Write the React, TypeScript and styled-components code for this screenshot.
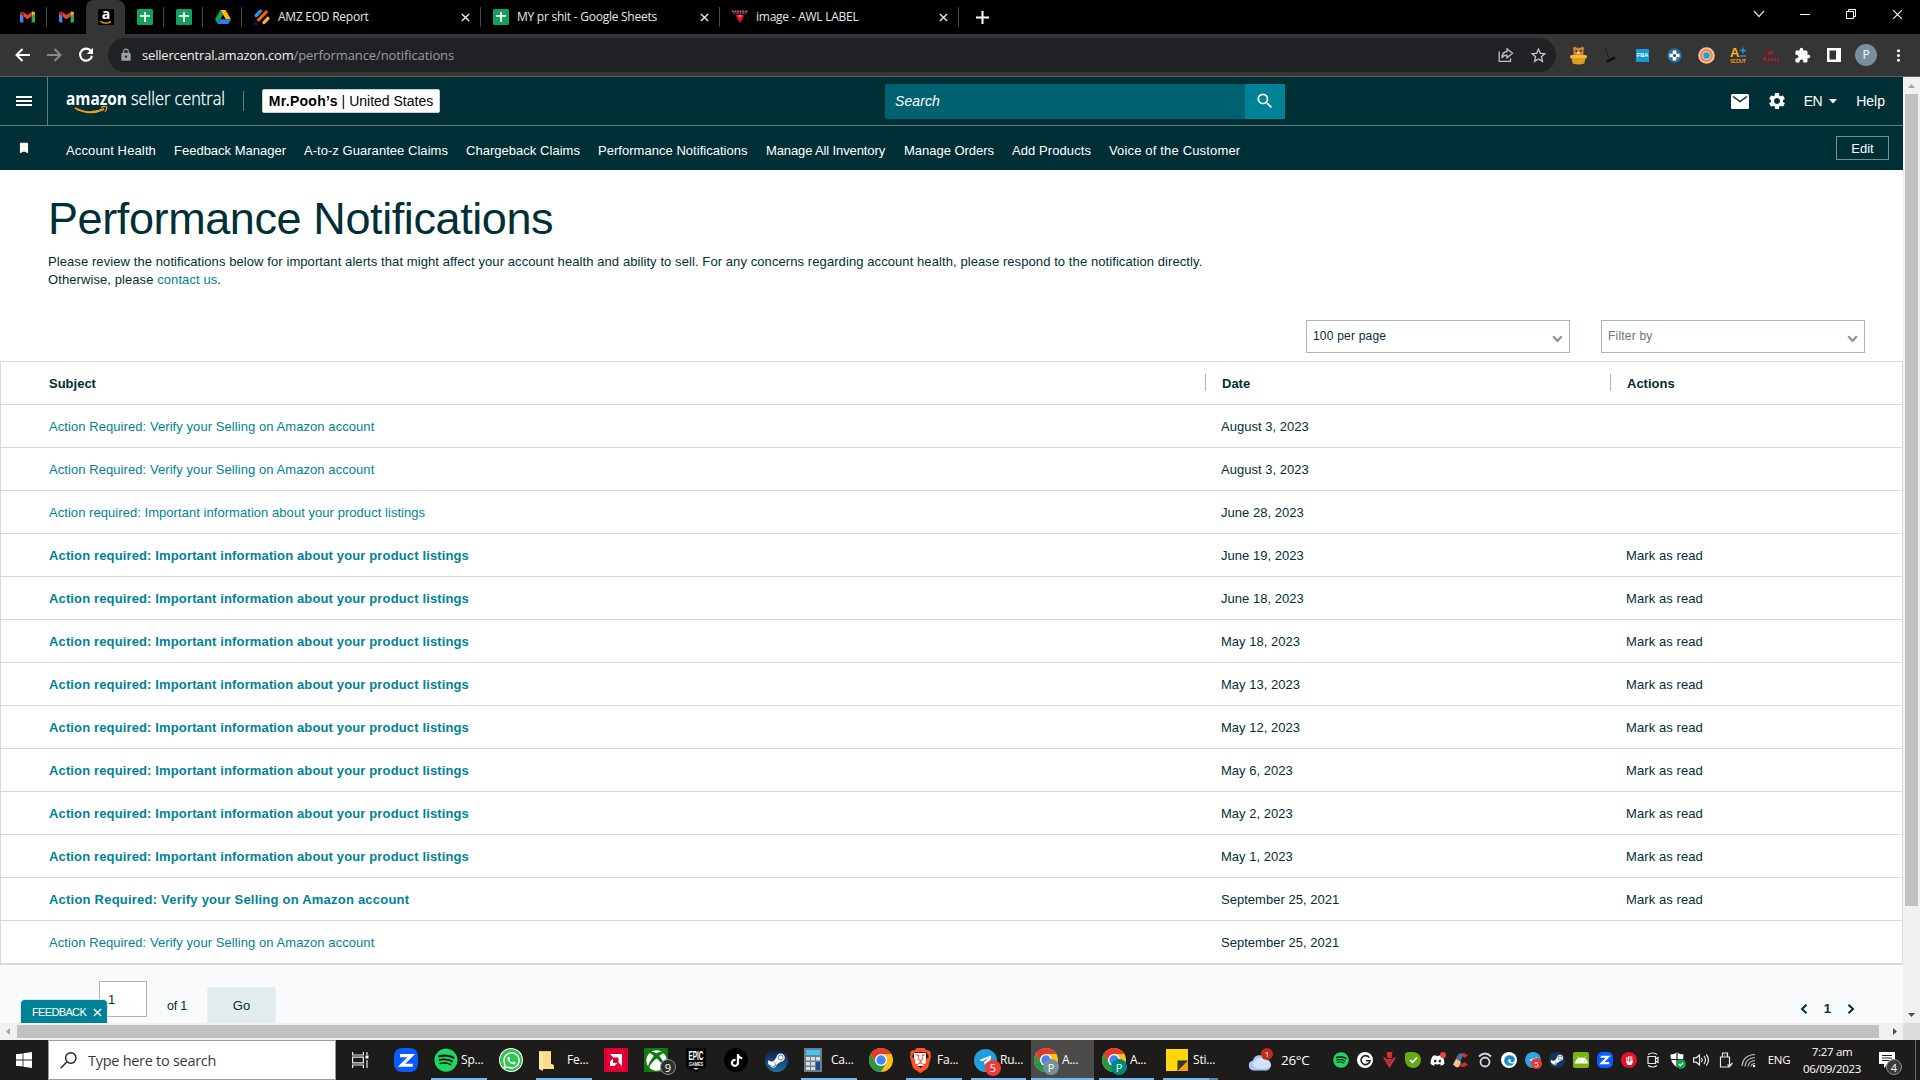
import React, { ReactNode } from "react";
import styled, { createGlobalStyle, css } from "styled-components";
import { FaSpotify, FaWhatsapp, FaXbox, FaTiktok, FaSteamSymbol, FaTelegramPlane, FaDiscord, FaAndroid, FaEdge, FaFistRaised } from "react-icons/fa";
import { SiBrave } from "react-icons/si";
import { MdLock, MdStarBorder, MdExtension, MdMoreVert, MdSettings, MdSearch, MdBookmark } from "react-icons/md";

const UI = `"Open Sans", "Noto Sans", sans-serif`;
const ARIAL = `"Liberation Sans", Arial, sans-serif`;
const INK = "#002f36";
const TEAL = "#008296";

const Global = createGlobalStyle`
  * { box-sizing: border-box; }
  html, body { margin: 0; padding: 0; overflow: hidden; background: #fff; }
  svg { display: block; flex: none; overflow: visible; }
`;

const Screen = styled.div`
  width: 1920px;
  height: 1080px;
  display: flex;
  flex-direction: column;
  overflow: hidden;
`;

/* ---------- Browser window ---------- */

const TabStrip = styled.div`
  height: 34px;
  background: #000;
  display: flex;
  justify-content: space-between;
  padding-left: 8px;
`;

const Tabs = styled.div`
  display: flex;
  align-items: stretch;
`;

const IconTab = styled.div<{ $active?: boolean; $line?: boolean }>`
  width: 39px;
  display: flex;
  align-items: center;
  justify-content: center;
  background: ${(p) => (p.$active ? "#353535" : "none")};
  border-radius: 8px 8px 0 0;
  ${(p) =>
    p.$line &&
    css`
      background: linear-gradient(#4a4a4a, #4a4a4a) right center / 1px 20px no-repeat;
      border-radius: 0;
    `}
`;

const WideTab = styled.div<{ $w: number }>`
  width: ${(p) => p.$w}px;
  display: flex;
  align-items: center;
  padding: 0 11px 0 12px;
  gap: 8px;
  background: linear-gradient(#4a4a4a, #4a4a4a) right center / 1px 20px no-repeat;
`;

const TabTitle = styled.span`
  flex: 1;
  color: #e8e8e8;
  font: 12px/16px ${UI};
  letter-spacing: -0.25px;
  white-space: nowrap;
`;

const NewTab = styled.div`
  width: 47px;
  display: flex;
  align-items: center;
  justify-content: center;
`;

const WindowControls = styled.div`
  display: grid;
  grid-template-columns: repeat(4, 46px);
  height: 28px;
  place-items: center;
`;

const Toolbar = styled.div`
  height: 43px;
  background: #353535;
  border-bottom: 1px solid #606060;
  display: flex;
  align-items: center;
  padding-left: 6px;
  color: #fff;
`;

const NavButton = styled.div<{ $dim?: boolean }>`
  width: 32px;
  display: flex;
  justify-content: center;
  color: ${(p) => (p.$dim ? "#8a8a8a" : "#fff")};
`;

const Omnibox = styled.div`
  width: 1448px;
  height: 34px;
  margin-left: 6px;
  border-radius: 17px;
  background: #202124;
  display: flex;
  align-items: center;
  padding: 0 2px 0 11px;
`;

const Url = styled.div`
  flex: 1;
  margin-left: 9px;
  font: 13px/18px ${UI};
  letter-spacing: -0.18px;
  color: #f0f0f0;
`;

const UrlPath = styled.span`
  color: #9a9da1;
  letter-spacing: -0.1px;
`;

const OmniAction = styled.div`
  width: 32px;
  display: flex;
  justify-content: center;
  color: #c4c7c9;
`;

const Extensions = styled.div`
  display: grid;
  grid-template-columns: repeat(11, 32px);
  margin-left: 6px;
  place-items: center;
`;

const Profile = styled.div`
  width: 22px;
  height: 22px;
  border-radius: 50%;
  background: #78909c;
  color: #fff;
  font: 12px/22px ${UI};
  text-align: center;
`;

/* ---------- Page viewport ---------- */

const Viewport = styled.div`
  height: 946px;
  display: flex;
`;

const Page = styled.div`
  width: 1903px;
  display: flex;
  flex-direction: column;
  background: #fff;
  font-family: ${ARIAL};
  color: ${INK};
`;

const Header = styled.div`
  height: 49px;
  flex: none;
  background: ${INK};
  border-bottom: 1px solid #64797c;
  display: flex;
  align-items: center;
  color: #fff;
`;

const Burger = styled.div`
  width: 48px;
  height: 48px;
  border-right: 1px solid #64797c;
  display: flex;
  flex-direction: column;
  gap: 2px;
  align-items: flex-start;
  justify-content: center;
  padding-left: 16px;
`;

const BurgerLine = styled.div`
  width: 16px;
  height: 2px;
  background: #fff;
`;

const Logo = styled.svg`
  margin-left: 18px;
`;

const HeaderRule = styled.div`
  width: 1px;
  height: 20px;
  margin-left: 15px;
  background: #64797c;
`;

const Merchant = styled.div`
  width: 178px;
  height: 24px;
  margin-left: 18px;
  border: 1px solid #c8cfd0;
  border-radius: 2px;
  background: #fff;
  color: #000;
  font-size: 14px;
  line-height: 23px;
  text-align: center;
  white-space: nowrap;
`;

const MerchantName = styled.b`
  letter-spacing: 0.28px;
`;

const SearchBox = styled.div`
  width: 360px;
  height: 35px;
  margin-left: 445px;
  border-radius: 2px 0 0 2px;
  background: #006170;
  padding-left: 10px;
  font-size: 14px;
  letter-spacing: 0.1px;
  font-style: italic;
  line-height: 34px;
`;

const SearchButton = styled.div`
  width: 40px;
  height: 35px;
  background: ${TEAL};
  display: flex;
  align-items: center;
  justify-content: center;
`;

const HeaderTools = styled.div`
  flex: 1;
  display: flex;
  align-items: center;
  justify-content: flex-end;
  padding-right: 18px;
  font-size: 14px;
`;

const SettingsButton = styled.div`
  margin: 0 17px 0 18px;
`;

const Lang = styled.div`
  display: flex;
  align-items: center;
  gap: 7px;
  margin-right: 19px;
  letter-spacing: -0.5px;
`;

const Shortcuts = styled.div`
  height: 44px;
  flex: none;
  background: ${INK};
  color: #fff;
  display: flex;
  padding: 0 14px 0 17px;
`;

const ShortcutMark = styled.div`
  width: 49px;
  padding-top: 15px;
`;

const ShortcutLinks = styled.div`
  flex: 1;
  display: flex;
  gap: 18px;
  padding-top: 16px;
  font-size: 13px;
  line-height: 18px;
`;

const Shortcut = styled.span<{ $w: number; $track: number }>`
  width: ${(p) => p.$w}px;
  letter-spacing: ${(p) => p.$track}px;
  white-space: nowrap;
`;

const EditButton = styled.div`
  width: 53px;
  height: 24px;
  margin-top: 10px;
  border: 1px solid #7d8f91;
  font-size: 13px;
  line-height: 23px;
  text-align: center;
`;

const Intro = styled.div`
  height: 150px;
  flex: none;
  padding: 24px 48px 0;
`;

const Title = styled.h1`
  margin: 0 0 9px;
  font-size: 45px;
  font-weight: 400;
  line-height: 50px;
  letter-spacing: -0.4px;
`;

const Lead = styled.p`
  margin: 0;
  width: 1170px;
  font-size: 13px;
  line-height: 18px;
  letter-spacing: 0.085px;
`;

const TextLink = styled.span`
  color: ${TEAL};
`;

const Filters = styled.div`
  height: 41px;
  flex: none;
  display: flex;
  justify-content: flex-end;
  gap: 31px;
  padding-right: 38px;
`;

const Select = styled.div<{ $placeholder?: boolean }>`
  width: 264px;
  height: 33px;
  border: 1px solid #aab7b8;
  display: flex;
  align-items: center;
  justify-content: space-between;
  padding: 0 6px;
  font-size: 12px;
  line-height: 31px;
  letter-spacing: 0.2px;
  color: ${(p) => (p.$placeholder ? "#687778" : INK)};
`;

const SelectArrow = styled.svg`
  margin-top: 4px;
`;

const Table = styled.div`
  flex: none;
  border: 1px solid #d5dbdb;
  border-bottom: 2px solid #d5dbdb;
  font-size: 13px;
`;

const gridColumns = css`
  display: grid;
  grid-template-columns: 1204px 405px 1fr;
  align-items: center;
`;

const HeadRow = styled.div`
  ${gridColumns}
  height: 42px;
  font-weight: 700;
`;

const HeadCell = styled.div<{ $first?: boolean }>`
  height: 17px;
  margin-bottom: 2px;
  line-height: 19px;
  padding-left: ${(p) => (p.$first ? 48 : 16)}px;
  border-left: ${(p) => (p.$first ? "none" : "1px solid #aab7b8")};
`;

const Row = styled.div`
  ${gridColumns}
  height: 43px;
  border-top: 1px solid #d5dbdb;
`;

const Subject = styled.div<{ $unread: boolean; $track: number }>`
  padding-left: 48px;
  color: ${TEAL};
  font-weight: ${(p) => (p.$unread ? 700 : 400)};
  letter-spacing: ${(p) => p.$track}px;
`;

const Cell = styled.div`
  padding-left: 16px;
  letter-spacing: 0.03px;
`;

const ActionCell = styled(Cell)`
  letter-spacing: 0.09px;
`;

const Footer = styled.div`
  flex: 1;
  min-height: 0;
  overflow: hidden;
  background: #f8fafc;
  display: flex;
  padding-left: 20px;
  font-size: 13px;
`;

const FeedbackTab = styled.div`
  width: 88px;
  flex: none;
  height: 25px;
  margin-top: 34px;
  margin-right: -9px;
  z-index: 1;
  border: 1px solid #d9e8ea;
  border-bottom: 0;
  border-radius: 5px 5px 0 0;
  background: ${TEAL};
  color: #fff;
  display: flex;
  align-items: center;
  gap: 7px;
  padding-left: 11px;
  font-size: 11px;
  letter-spacing: -0.65px;
`;

const PageInput = styled.div`
  width: 48px;
  height: 36px;
  margin-top: 16px;
  border: 1px solid #aab7b8;
  background: #fff;
  padding-left: 8px;
  line-height: 35px;
`;

const PageTotal = styled.div`
  width: 60px;
  padding: 34px 0 0 20px;
  font-size: 12.5px;
  letter-spacing: -0.2px;
`;

const GoButton = styled.div`
  width: 69px;
  height: 40px;
  margin-top: 22px;
  border: 1px solid #eaf0f0;
  border-radius: 2px;
  background: #e3eced;
  text-align: center;
  font-size: 13px;
  line-height: 36px;
`;

const Pager = styled.div`
  flex: 1;
  height: 16px;
  margin-top: 36px;
  display: flex;
  justify-content: flex-end;
  align-items: center;
  gap: 16px;
  padding-right: 48px;
  font-weight: 700;
  line-height: 14px;
`;

const VScroll = styled.div`
  width: 17px;
  background: #f1f1f1;
  display: flex;
  flex-direction: column;
  align-items: center;
  justify-content: space-between;
  padding: 7px 0 6px;
`;

const VThumb = styled.div`
  width: 13px;
  height: 812px;
  margin: 6px 0 auto;
  background: #c1c1c1;
`;

const HScroll = styled.div`
  height: 17px;
  flex: none;
  background: #f1f1f1;
  display: flex;
  align-items: center;
  padding-left: 6px;
`;

const HThumb = styled.div`
  width: 1862px;
  height: 13px;
  margin: 0 14px 0 7px;
  background: #c1c1c1;
`;

const ScrollCorner = styled.div`
  width: 17px;
  height: 17px;
  margin-left: auto;
  background: #dcdcdc;
`;

/* ---------- Windows taskbar ---------- */

const Taskbar = styled.div`
  height: 40px;
  flex: none;
  background: #1d1c1b;
  display: flex;
  color: #fff;
  font: 12px/16px ${UI};
`;

const StartButton = styled.div`
  width: 48px;
  flex: none;
  display: flex;
  align-items: center;
  justify-content: center;
`;

const TaskSearch = styled.div`
  width: 288px;
  flex: none;
  border: 1px solid #9b9b9b;
  background: #fff;
  color: #3a3a3a;
  display: flex;
  align-items: center;
  gap: 11px;
  padding: 1px 0 0 11px;
  font-size: 14.5px;
  letter-spacing: -0.28px;
`;

const Task = styled.div<{ $w: number; $gap?: number; $running?: boolean; $active?: boolean }>`
  width: ${(p) => p.$w}px;
  flex: none;
  margin-left: ${(p) => p.$gap || 0}px;
  display: flex;
  align-items: center;
  justify-content: ${(p) => (p.$running ? "flex-start" : "center")};
  gap: 3px;
  padding: ${(p) => (p.$running ? "2px 0 0 3px" : "0")};
  background: ${(p) => (p.$active ? "#4b4a49" : "none")};
  border-bottom: ${(p) => (p.$running ? "2px solid #76b9ed" : "none")};
  white-space: nowrap;
`;

const TaskLabel = styled.span<{ $gap?: number }>`
  margin-left: ${(p) => p.$gap || 0}px;
  letter-spacing: -0.2px;
`;

const MoreWindows = styled.div`
  width: 9px;
  flex: none;
  border-bottom: 2px solid #5b87ab;
`;

const IconHolder = styled.div`
  position: relative;
  flex: none;
`;

const Badge = styled.div<{ $bg: string; $ring?: boolean; $size?: number; $top?: number; $right?: number }>`
  position: absolute;
  right: ${(p) => p.$right ?? -6}px;
  top: ${(p) => p.$top ?? 11}px;
  width: ${(p) => p.$size || 16}px;
  height: ${(p) => p.$size || 16}px;
  border-radius: 50%;
  background: ${(p) => p.$bg};
  border: ${(p) => (p.$ring ? "1px solid #8d8d8d" : "none")};
  color: #fff;
  display: flex;
  align-items: center;
  justify-content: center;
  font: ${(p) => ((p.$size || 16) > 12 ? 11 : 8)}px/1 ${UI};
`;

const Disc = styled.div<{ $bg: string; $fg?: string; $size?: number; $r?: string }>`
  width: ${(p) => p.$size || 24}px;
  height: ${(p) => p.$size || 24}px;
  flex: none;
  border-radius: ${(p) => p.$r || "50%"};
  background: ${(p) => p.$bg};
  color: ${(p) => p.$fg || "#fff"};
  display: flex;
  align-items: center;
  justify-content: center;
`;

const Weather = styled.div`
  width: 81px;
  flex: none;
  display: flex;
  align-items: center;
  gap: 8px;
  margin-left: 30px;
  font-size: 13.5px;
  letter-spacing: -0.3px;
`;

const Tray = styled.div`
  display: grid;
  flex: none;
  grid-template-columns: repeat(18, 24px);
  place-items: center;
`;

const TrayText = styled.div<{ $w: number }>`
  width: ${(p) => p.$w}px;
  flex: none;
  display: flex;
  flex-direction: column;
  align-items: center;
  justify-content: center;
  font-size: 11.5px;
  line-height: 17.5px;
  letter-spacing: -0.3px;
`;

const Notifications = styled.div`
  width: 46px;
  flex: none;
  display: flex;
  align-items: center;
  padding-left: 12px;
`;

const ShowDesktop = styled.div`
  width: 5px;
  flex: none;
  margin-left: auto;
  border-left: 1px solid #6b6b6b;
`;

/* ---------- Icons ---------- */

const Gmail = () => (
  <svg width="15" height="12" viewBox="0 0 15 12">
    <path d="M1 11.500h2.400V5L0 2.500V10.500z" fill="#4285f4" />
    <path d="M14 11.500h-2.400V5L15 2.500V10.500z" fill="#34a853" />
    <path d="M0 2.600C0 .6 2-.2 3.400.9V5.200L0 2.800z" fill="#c5221f" />
    <path d="M15 2.600C15 .6 13-.2 11.600.9V5.200L15 2.800z" fill="#fbbc04" />
    <path d="M3.400.9 7.500 4 11.600.9V5.200L7.500 8.300 3.400 5.200z" fill="#ea4335" />
  </svg>
);

const Sheets = () => (
  <svg width="16" height="16" viewBox="0 0 16 16">
    <rect width="16" height="16" rx="1.500" fill="#12a05c" />
    <path d="M7.200 3h1.800v3h4v1.800H9V13H7.200V7.800H3V6h4.200z" fill="#fff" />
  </svg>
);

const Drive = () => (
  <svg width="16" height="14" viewBox="0 0 16 14">
    <path d="M5.400 0 0 9.300 2.700 14 8 4.600z" fill="#10a35b" />
    <path d="M5.400 0h5.200L16 9.300h-5.300z" fill="#ffba00" />
    <path d="M5.400 9.300H16L13.300 14H2.700z" fill="#2f7bf0" />
  </svg>
);

const Stripes = () => (
  <svg width="16" height="16" viewBox="0 0 16 16" strokeLinecap="round" strokeWidth="3.200">
    <path d="M2.200 6.500 6.500 2.200" stroke="#1a9cff" />
    <path d="M4.500 10.800 12.200 3" stroke="#ff6100" />
    <path d="M10 13.500 14 9.300" stroke="#ffb629" />
    <path d="M0 11v5h5z" fill="#0a1551" />
  </svg>
);

const LabelIcon = () => (
  <svg width="16" height="14" viewBox="0 0 17 14">
    <path d="M0 1h17" stroke="#b0722c" strokeWidth="2" strokeDasharray="2 .7" />
    <path d="M1.500 3h14" stroke="#8b2f96" strokeWidth="1.600" strokeDasharray="2.400 .6" />
    <path d="M4.500 4.800h8q.5 1-.7 2.700L8.500 13.500 5.200 7.500Q4 5.800 4.500 4.800z" fill="#f31414" />
    <path d="M6.500 5.200h4L9 7H8z" fill="#ff8d8d" />
  </svg>
);

const Cross = ({ size = 9, color = "#e8e8e8", width = 1.6 }: { size?: number; color?: string; width?: number }) => (
  <svg width={size} height={size} viewBox="0 0 10 10" fill="none" stroke={color} strokeWidth={width}>
    <path d="m1 1 8 8M9 1 1 9" />
  </svg>
);

const Arrow = ({ flip }: { flip?: boolean }) => (
  <svg width="15" height="14" viewBox="0 0 15 14" fill="none" stroke="currentColor" strokeWidth="2">
    <path d={flip ? "M0 7h13M7.500 1l6 6-6 6" : "M15 7H2M7.500 1l-6 6 6 6"} />
  </svg>
);

const Reload = () => (
  <svg width="16" height="16" viewBox="0 0 16 16">
    <path d="M13.300 4.600A6 6 0 1 0 14 8.800" fill="none" stroke="currentColor" strokeWidth="2.100" />
    <path d="M15 .8v6.200H8.800z" fill="currentColor" />
  </svg>
);

const Chrome = () => (
  <svg width="24" height="24" viewBox="0 0 24 24">
    <circle cx="12" cy="12" r="12" fill="#fbc116" />
    <path d="M12 6h10.390a12 12 0 0 0-20.780 0L6.800 15z" fill="#e33b2e" />
    <path d="M1.610 6A12 12 0 0 0 12 24l5.200-9-10.400 0z" fill="#279847" />
    <circle cx="12" cy="12" r="6" fill="#fff" />
    <circle cx="12" cy="12" r="4.700" fill="#4285f4" />
  </svg>
);

const ZoomLetter = ({ size = 24 }: { size?: number }) => (
  <Disc $bg="#0b5cff" $size={size} $r={size > 16 ? "8px" : "5px"}>
    <svg width={size * 0.62} height={size * 0.62} viewBox="0 0 14 14" fill="none" stroke="#fff" strokeWidth="3">
      <path d="M1 2.500h10.500L2.500 11.500H13" />
    </svg>
  </Disc>
);

const Folder = () => (
  <svg width="15" height="21" viewBox="0 0 15 21">
    <path d="M0 1h12v13l3 1v4H3z" fill="#eecb66" />
    <path d="M3 2h9v12l2.500 1V19H4z" fill="#f8dd8d" />
    <path d="M0 1l4 2v18l-4-2z" fill="#fbe7a6" />
  </svg>
);

const AmdMark = () => (
  <Disc $bg="#df0031" $r="0">
    <svg width="14" height="14" viewBox="0 0 14 14" fill="#fff">
      <path d="M1 1h12v12L9.500 9.500v-5h-5zM4 5.500v4.500h4.500L5.500 13H1V8.500z" />
    </svg>
  </Disc>
);

const Epic = () => (
  <svg width="20" height="24" viewBox="0 0 20 24" fontFamily="Liberation Sans" fontWeight="700" fill="#fff">
    <path d="M1.500 0h17Q20 0 20 1.500V19.500L10 24 0 19.500V1.500Q0 0 1.500 0z" fill="#060606" />
    <text x="2.500" y="12" fontSize="12" textLength="15" lengthAdjust="spacingAndGlyphs">EPIC</text>
    <text x="3" y="17.500" fontSize="4.800" textLength="14" lengthAdjust="spacingAndGlyphs">GAMES</text>
    <path d="M7 20.300h6L10 21.800z" />
  </svg>
);

const Calculator = () => (
  <svg width="18" height="24" viewBox="0 0 18 24">
    <rect width="18" height="24" fill="#6f7d8a" />
    <rect x="2" y="2" width="14" height="5" fill="#3cc8f4" />
    <path d="M2 9h4v3.500H2zM7 9h4v3.500H7zM12 9h4v3.500h-4zM2 14h4v3.500H2zM7 14h4v3.500H7zM2 19h4v3H2zM7 19h4v3H7z" fill="#d7dce0" />
    <path d="M12 14h4v8h-4z" fill="#134f9c" />
  </svg>
);

const BraveIcon = () => (
  <Disc $bg="linear-gradient(90deg, transparent 24%, #fff 24%, #fff 76%, transparent 76%) center / 100% 60% no-repeat" $size={22} $r="0">
    <SiBrave size={25} color="#fb542b" />
  </Disc>
);

const Note = () => (
  <svg width="22" height="22" viewBox="0 0 22 22">
    <path d="M0 0h22v22H0z" fill="#ffd60a" />
    <path d="M11.500 22V11.500H22V22z" fill="#f0a30a" />
    <path d="M11.500 22V11.500H22z" fill="#333" />
  </svg>
);

const Cloud = () => (
  <svg width="25" height="24" viewBox="0 0 25 24">
    <path d="M5.500 22.500a5 5 0 0 1-.6-9.900 7 7 0 0 1 13-1.600A6 6 0 0 1 19 22.500z" fill="#a9c6f7" />
    <path d="M5 18a5 4 0 0 1 2-5 6 6 0 0 1 10-1 6 6 0 0 1 6 6c-5 4-13 4-18 0z" fill="#d3e2fb" />
  </svg>
);

const PoohIcon = () => (
  <svg width="17" height="19" viewBox="0 0 17 19">
    <path d="M3.500 9V4Q2 1.500 4 1q1.500-.5 2.200.7h4.600Q11.500.5 13 1q2 .5.500 3v5z" fill="#cc8238" />
    <circle cx="6.300" cy="5" r=".9" fill="#3a2410" />
    <circle cx="10.700" cy="5" r=".9" fill="#3a2410" />
    <ellipse cx="8.500" cy="7" rx="1.800" ry="1.300" fill="#f2d2a0" />
    <rect x="0" y="9" width="17" height="3.500" rx="1.700" fill="#f5bd33" />
    <path d="M1.500 12h14l-1.200 5.500q-5.800 2-11.600 0z" fill="#dca01f" />
  </svg>
);

const extensionIcons: ReactNode[] = [
  <PoohIcon />,
  <svg width="12" height="16" viewBox="0 0 12 16" fill="none" stroke="#0a0a0a"><path d="M1.500 1 5 12" strokeWidth=".8" opacity=".7" /><path d="m3 14.500 8-4" strokeWidth="2" /></svg>,
  <svg width="13" height="13" viewBox="0 0 13 13"><rect width="13" height="13" fill="#159cd8" /><text x=".8" y="8" fontSize="6" fontWeight="700" fill="#fff" fontFamily="Liberation Sans" textLength="11.400" lengthAdjust="spacingAndGlyphs">FBA</text></svg>,
  <svg width="15" height="15" viewBox="0 0 15 15"><circle cx="7.500" cy="7.500" r="7.200" fill="#2a6fa3" /><path d="M5.700 2.500h3.600v3.200h3.200v3.600H9.300v3.200H5.700V9.300H2.500V5.700h3.200z" fill="#fff" /><circle cx="7.500" cy="7.500" r="1.500" fill="#174870" /></svg>,
  <svg width="17" height="17" viewBox="0 0 17 17"><circle cx="8.500" cy="8.500" r="8.300" fill="#f7c5a0" /><circle cx="8.500" cy="8.500" r="6.400" fill="#f08444" /><circle cx="8.500" cy="8.500" r="4.300" fill="#f9d7bd" /><circle cx="8.500" cy="8.500" r="3.300" fill="#1aa0e0" /></svg>,
  <svg width="17" height="16" viewBox="0 0 17 16" fontFamily="Liberation Sans" fontWeight="700"><text x="0" y="10" fontSize="13" fill="#fdb515">A</text><path d="M10 3.500h6M13 .5v6M10 9h6" stroke="#1f9ac4" strokeWidth="1.400" /><text x="0" y="15.500" fontSize="5.500" fill="#f08a1c" textLength="16">SCOUT</text></svg>,
  <svg width="17" height="13" viewBox="0 0 17 13" fontFamily="Liberation Sans" fontWeight="700" fill="#e00914"><text x="5" y="5.500" fontSize="6">IP</text><text x="0" y="12" fontSize="6" textLength="16.500">Alert</text></svg>,
  <MdExtension size={17} color="#fff" />,
  <svg width="14" height="14" viewBox="0 0 14 14"><path d="M0 0h14v14H0zM2.500 2.500v9H9v-9z" fill="#fff" fillRule="evenodd" /></svg>,
  <Profile>P</Profile>,
  <MdMoreVert size={19} color="#fff" />,
];

const Spark = ({ d, w = 16 }: { d: string; w?: number }) => (
  <svg width={w} height="16" viewBox="0 0 16 16" fill="none" stroke="#e8e8e8" strokeWidth="1.200"><path d={d} /></svg>
);

const trayIcons: ReactNode[] = [
  <FaSpotify size={16} color="#1ed760" />,
  <Disc $bg="#fff" $size={16}>
    <svg width="11" height="11" viewBox="0 0 11 11" fill="none" stroke="#222" strokeWidth="1.600"><path d="M9.300 2.600A4.500 4.500 0 1 0 10 5.800H6" /></svg>
  </Disc>,
  <svg width="13" height="16" viewBox="0 0 13 16" fill="#d5303a"><path d="M3.500 0h6L8.500 6h-4zM0 5.500h2.500l4 6 4-6H13L6.500 16zM4 7h5L6.500 11z" /></svg>,
  <Disc $bg="#66a818" $size={16} $r="3px 8px 8px 8px">
    <svg width="9" height="8" viewBox="0 0 9 8" fill="none" stroke="#fff" strokeWidth="1.700"><path d="m1.200 4 2.300 2.300L8 1.500" /></svg>
  </Disc>,
  <IconHolder><FaDiscord size={15} color="#fff" /><Badge $bg="#f23f42" $size={6} $top={-1} $right={-1} /></IconHolder>,
  <svg width="16" height="16" viewBox="0 0 16 16"><path d="M15 3.500A7 7 0 1 0 15 12.500L11.500 10a3.500 3.500 0 1 1 0-4z" fill="#c8302b" /><path d="M6.500 1 10 3 7.500 9l-4-2z" fill="#2b7cc0" /><path d="m3 7 5 2.500-2.500 6Q2 15 0 12.500z" fill="#ecc693" /></svg>,
  <svg width="14" height="16" viewBox="0 0 14 16" fill="none" stroke="#cbd9ea" strokeWidth="1.800"><circle cx="7" cy="10" r="4.500" /><path d="M1 4.500Q7-1.500 13 4.500" /></svg>,
  <Disc $bg="#fff" $size={16}><FaEdge size={11} color="#1289c9" /></Disc>,
  <IconHolder><Disc $bg="#2ca5e0" $size={16}><FaTelegramPlane size={9} /></Disc><Badge $bg="#e5383b" $size={11} $top={6} $right={-1}>5</Badge></IconHolder>,
  <Disc $bg="#14375f" $size={16}><FaSteamSymbol size={14} /></Disc>,
  <Disc $bg="#7cb40b" $size={16} $r="2px"><FaAndroid size={13} /></Disc>,
  <ZoomLetter size={16} />,
  <Disc $bg="#e8102a" $size={16}><FaFistRaised size={9} /></Disc>,
  <Spark d="M3 2.500Q8-.5 12 2.500M3 13.500Q8 16.500 12 13.500M3 4.500h7.500v7H3zM10.500 7 13 5.500v5L10.500 9" />,
  <svg width="17" height="17" viewBox="0 0 17 17"><path d="M8 .5Q11 2.500 14.500 2.500 15 11 8 15 1 11 1.500 2.500 5 2.500 8 .5z" fill="#fff" /><path d="M8 1v13M2 7.500h12" stroke="#1d1c1b" strokeWidth="1.200" /><circle cx="12" cy="12" r="4.800" fill="#16a34a" /><path d="m9.800 12 1.600 1.600 2.800-3" stroke="#fff" fill="none" strokeWidth="1.200" /></svg>,
  <Spark d="M.6 5.800h2.600L6.500 3v10L3.200 10.200H.6zM8.500 5.800q1.500 2.200 0 4.400M11 4q3 4 0 8M13.200 2.500q4.500 5.500 0 11" />,
  <Spark d="M5.500 5V1h5v4M3.500 5h9v10h-9zM10.500 12.500l2 2 3-3.500M7 3h.6M8.800 3h.6" />,
  <svg width="16" height="16" viewBox="0 0 16 16" fill="none" stroke="#bdbdbd" strokeWidth="1.200"><path d="M1 14Q2 3 14 2.500M4 14.500Q5 6 14 5.500M7 14.500Q8 9 14 8.500M10 14.500q.5-3 4-3" /><circle cx="13" cy="14" r="1.200" fill="#fff" stroke="none" /></svg>,
];

/* ---------- Data ---------- */

const shortcuts: [string, number, number][] = [
  ["Account Health", 90, 0.13],
  ["Feedback Manager", 112, 0],
  ["A-to-z Guarantee Claims", 144, 0.04],
  ["Chargeback Claims", 114, 0.03],
  ["Performance Notifications", 150, 0.03],
  ["Manage All Inventory", 120, -0.12],
  ["Manage Orders", 90, -0.02],
  ["Add Products", 79, 0.08],
  ["Voice of the Customer", 132, 0.16],
];

const VERIFY = "Action Required: Verify your Selling on Amazon account";
const LISTING = "Action required: Important information about your product listings";

const notifications: { subject: string; date: string; unread: boolean }[] = [
  { subject: VERIFY, date: "August 3, 2023", unread: false },
  { subject: VERIFY, date: "August 3, 2023", unread: false },
  { subject: LISTING, date: "June 28, 2023", unread: false },
  { subject: LISTING, date: "June 19, 2023", unread: true },
  { subject: LISTING, date: "June 18, 2023", unread: true },
  { subject: LISTING, date: "May 18, 2023", unread: true },
  { subject: LISTING, date: "May 13, 2023", unread: true },
  { subject: LISTING, date: "May 12, 2023", unread: true },
  { subject: LISTING, date: "May 6, 2023", unread: true },
  { subject: LISTING, date: "May 2, 2023", unread: true },
  { subject: LISTING, date: "May 1, 2023", unread: true },
  { subject: VERIFY, date: "September 25, 2021", unread: true },
  { subject: VERIFY, date: "September 25, 2021", unread: false },
];

const tracking = (subject: string, unread: boolean) => {
  if (unread) return subject === VERIFY ? 0.22 : 0.137;
  return subject === VERIFY ? 0.07 : 0.05;
};

/* ---------- Sections ---------- */

const BrowserChrome = () => (
  <>
    <TabStrip>
      <Tabs>
        <IconTab $line><Gmail /></IconTab>
        <IconTab><Gmail /></IconTab>
        <IconTab $active>
          <Disc $bg="#000" $size={16} $r="1px">
            <svg width="14" height="16" viewBox="0 0 14 16">
              <text x="2.800" y="10.300" fontSize="14" fontWeight="700" fill="#fff" fontFamily="Open Sans">a</text>
              <path d="M1.500 12.300q5 3.400 10.500.4" stroke="#ff9900" strokeWidth="1.400" fill="none" />
            </svg>
          </Disc>
        </IconTab>
        <IconTab $line><Sheets /></IconTab>
        <IconTab $line><Sheets /></IconTab>
        <IconTab $line><Drive /></IconTab>
        <WideTab $w={239}><Stripes /><TabTitle>AMZ EOD Report</TabTitle><Cross /></WideTab>
        <WideTab $w={239}><Sheets /><TabTitle>MY pr shit - Google Sheets</TabTitle><Cross /></WideTab>
        <WideTab $w={239}><LabelIcon /><TabTitle>image - AWL LABEL</TabTitle><Cross /></WideTab>
        <NewTab>
          <svg width="13" height="13" viewBox="0 0 13 13" stroke="#fff" strokeWidth="2"><path d="M6.500 0v13M0 6.500h13" /></svg>
        </NewTab>
      </Tabs>
      <WindowControls>
        <svg width="12" height="8" viewBox="0 0 12 8" fill="none" stroke="#ddd" strokeWidth="1.200"><path d="m1 1 5 5.500L11 1" /></svg>
        <svg width="10" height="10" viewBox="0 0 10 10" stroke="#fff"><path d="M0 5.500h10" /></svg>
        <svg width="10" height="10" viewBox="0 0 10 10" fill="none" stroke="#fff"><path d="M.5 2.500h7v7h-7zM2.500 2.500v-2h7v7h-2" /></svg>
        <Cross size={11} color="#fff" width={1} />
      </WindowControls>
    </TabStrip>
    <Toolbar>
      <NavButton><Arrow /></NavButton>
      <NavButton $dim><Arrow flip /></NavButton>
      <NavButton><Reload /></NavButton>
      <Omnibox>
        <MdLock size={14} color="#9aa0a6" />
        <Url>sellercentral.amazon.com<UrlPath>/performance/notifications</UrlPath></Url>
        <OmniAction>
          <svg width="16" height="16" viewBox="0 0 16 16" fill="none" stroke="#bdc1c6" strokeWidth="1.300"><path d="M1.200 4.500v9.800h11.300v-3M9 1.800l5.500 4.500L9 10.800V8.300Q5.500 8 4 11q0-6 5-6.500z" /></svg>
        </OmniAction>
        <OmniAction><MdStarBorder size={19} /></OmniAction>
      </Omnibox>
      <Extensions>
        {extensionIcons.map((icon, i) => <React.Fragment key={i}>{icon}</React.Fragment>)}
      </Extensions>
    </Toolbar>
  </>
);

const SiteHeader = () => (
  <>
    <Header>
      <Burger><BurgerLine /><BurgerLine /><BurgerLine /></Burger>
      <Logo width="162" height="40" viewBox="0 0 162 40" fontFamily="Open Sans" fill="#fff">
        <text x="0" y="24" fontSize="18" fontWeight="700" textLength="61" lengthAdjust="spacingAndGlyphs">amazon</text>
        <text x="65" y="24" fontSize="18.500" fontWeight="300" stroke="#fff" strokeWidth=".3" textLength="94" lengthAdjust="spacingAndGlyphs">seller central</text>
        <path d="M9 27q14 8 29 1" stroke="#f7981d" strokeWidth="2" fill="none" />
        <path d="M35 26.100q5-1.200 5.800-.2.400 2.200-1.800 5" stroke="#f7981d" strokeWidth="1.300" fill="none" />
      </Logo>
      <HeaderRule />
      <Merchant><MerchantName>Mr.Pooh’s</MerchantName> | United States</Merchant>
      <SearchBox>Search</SearchBox>
      <SearchButton><MdSearch size={20} color="#fff" /></SearchButton>
      <HeaderTools>
        <svg width="18" height="15" viewBox="0 0 18 15"><rect width="18" height="15" rx="1.500" fill="#fff" /><path d="m2 2.500 7 5 7-5" stroke={INK} strokeWidth="1.500" fill="none" /></svg>
        <SettingsButton><MdSettings size={20} color="#fff" /></SettingsButton>
        <Lang>EN<svg width="8" height="5" viewBox="0 0 8 5"><path d="M0 0h8L4 4.500z" fill="#fff" /></svg></Lang>
        <span>Help</span>
      </HeaderTools>
    </Header>
    <Shortcuts>
      <ShortcutMark><MdBookmark size={14} color="#fff" /></ShortcutMark>
      <ShortcutLinks>
        {shortcuts.map(([label, w, track]) => (
          <Shortcut key={label} $w={w} $track={track}>{label}</Shortcut>
        ))}
      </ShortcutLinks>
      <EditButton>Edit</EditButton>
    </Shortcuts>
  </>
);

const Chevron = () => (
  <SelectArrow width="11" height="8" viewBox="0 0 11 8" fill="none" stroke="#879596" strokeWidth="2.200">
    <path d="m1.200 1.200 4.300 4.600 4.300-4.600" />
  </SelectArrow>
);

const NotificationsPage = () => (
  <Page>
    <SiteHeader />
    <Intro>
      <Title>Performance Notifications</Title>
      <Lead>
        Please review the notifications below for important alerts that might affect your account health and ability to
        sell. For any concerns regarding account health, please respond to the notification directly. Otherwise, please{" "}
        <TextLink>contact us</TextLink>.
      </Lead>
    </Intro>
    <Filters>
      <Select>100 per page<Chevron /></Select>
      <Select $placeholder>Filter by<Chevron /></Select>
    </Filters>
    <Table>
      <HeadRow>
        <HeadCell $first>Subject</HeadCell>
        <HeadCell>Date</HeadCell>
        <HeadCell>Actions</HeadCell>
      </HeadRow>
      {notifications.map((n, i) => (
        <Row key={i}>
          <Subject $unread={n.unread} $track={tracking(n.subject, n.unread)}>{n.subject}</Subject>
          <Cell>{n.date}</Cell>
          <ActionCell>{n.unread ? "Mark as read" : ""}</ActionCell>
        </Row>
      ))}
    </Table>
    <Footer>
      <FeedbackTab>FEEDBACK<Cross size={9} color="#fff" /></FeedbackTab>
      <PageInput>1</PageInput>
      <PageTotal>of 1</PageTotal>
      <GoButton>Go</GoButton>
      <Pager>
        <svg width="8" height="10" viewBox="0 0 8 10" fill="none" stroke={INK} strokeWidth="2"><path d="M6.500.8 2 5l4.500 4.200" /></svg>
        <span>1</span>
        <svg width="8" height="10" viewBox="0 0 8 10" fill="none" stroke={INK} strokeWidth="2"><path d="M1.500.8 6 5 1.500 9.200" /></svg>
      </Pager>
    </Footer>
  </Page>
);

const WindowsTaskbar = () => (
  <Taskbar>
    <StartButton>
      <svg width="16" height="16" viewBox="0 0 16 16" fill="#fff"><path d="M0 2.300 6.600 1.400v6.200H0zM7.400 1.200 16 0v7.600H7.400zM0 8.400h6.600v6.200L0 13.700zM7.400 8.400H16V16l-8.600-1.200z" /></svg>
    </StartButton>
    <TaskSearch>
      <svg width="17" height="17" viewBox="0 0 17 17" fill="none" stroke="#222" strokeWidth="1.400"><circle cx="10.800" cy="6" r="5.200" /><path d="M7 9.800.6 16.300" /></svg>
      Type here to search
    </TaskSearch>
    <Task $w={48}>
      <svg width="17" height="16" viewBox="0 0 17 16" fill="none" stroke="#e8e8e8" strokeWidth="1.200"><path d="M.6 0v3h10.800V0M.6 16v-3h10.800v3M.6 5.200h10.800v5.600H.6zM15 0v3M15 8v8" /><path d="M13.500 3.500h3v3h-3z" fill="#fff" stroke="none" /></svg>
    </Task>
    <Task $w={44}><ZoomLetter /></Task>
    <Task $w={56} $gap={3} $running>
      <Disc $bg="#111"><FaSpotify size={24} color="#1ed760" /></Disc><TaskLabel>Sp...</TaskLabel>
    </Task>
    <Task $w={48}><Disc $bg="radial-gradient(#2fc351 62%, #fff 66%)"><FaWhatsapp size={19} /></Disc></Task>
    <Task $w={56} $gap={1} $running>
      <Folder /><TaskLabel $gap={10}>Fe...</TaskLabel>
    </Task>
    <Task $w={40} $gap={4}><AmdMark /></Task>
    <Task $w={40}>
      <IconHolder>
        <Disc $bg="#107c10" $r="1px"><FaXbox size={21} /></Disc>
        <Badge $bg="#2f2f2f" $ring $right={-8}>9</Badge>
      </IconHolder>
    </Task>
    <Task $w={40}><Epic /></Task>
    <Task $w={40}><Disc $bg="#000"><FaTiktok size={13} /></Disc></Task>
    <Task $w={40}><Disc $bg="linear-gradient(#111d3c, #1a6fa8)" $size={23}><FaSteamSymbol size={19} /></Disc></Task>
    <Task $w={56} $gap={5} $running><Calculator /><TaskLabel $gap={6}>Ca...</TaskLabel></Task>
    <Task $w={40} $gap={4}><Chrome /></Task>
    <Task $w={56} $gap={5} $running>
      <BraveIcon /><TaskLabel $gap={3}>Fa...</TaskLabel>
    </Task>
    <Task $w={55} $gap={9} $running>
      <IconHolder>
        <Disc $bg="#229ed9" $size={23}><FaTelegramPlane size={13} /></Disc>
        <Badge $bg="#f23b39" $right={-4}>5</Badge>
      </IconHolder>
      <TaskLabel>Ru...</TaskLabel>
    </Task>
    <Task $w={63} $gap={5} $running $active>
      <IconHolder><Chrome /><Badge $bg="#78909c" $right={-1}>P</Badge></IconHolder>
      <TaskLabel $gap={1}>A...</TaskLabel>
    </Task>
    <Task $w={55} $gap={5} $running>
      <IconHolder><Chrome /><Badge $bg="#00897b" $right={-1}>P</Badge></IconHolder>
      <TaskLabel $gap={1}>A...</TaskLabel>
    </Task>
    <Task $w={46} $gap={9} $running><Note /><TaskLabel $gap={2}>Sti...</TaskLabel></Task>
    <MoreWindows />
    <Weather>
      <IconHolder><Cloud /><Badge $bg="#c42b1c" $size={12} $top={0} $right={0}>1</Badge></IconHolder>
      26°C
    </Weather>
    <Tray>{trayIcons.map((icon, i) => <React.Fragment key={i}>{icon}</React.Fragment>)}</Tray>
    <TrayText $w={36}>ENG</TrayText>
    <TrayText $w={70}><span>7:27 am</span><span>06/09/2023</span></TrayText>
    <Notifications>
      <IconHolder>
        <svg width="16" height="16" viewBox="0 0 16 16"><path d="M0 0h16v12H9l-4 4v-4H0z" fill="#fff" /><path d="M3 3.500h10M3 6h10M3 8.500h7" stroke="#1d1c1b" /></svg>
        <Badge $bg="#3a3a3a" $ring $top={7} $right={-7}>4</Badge>
      </IconHolder>
    </Notifications>
    <ShowDesktop />
  </Taskbar>
);

export default function App() {
  return (
    <Screen>
      <Global />
      <BrowserChrome />
      <Viewport>
        <NotificationsPage />
        <VScroll>
          <svg width="7" height="4" viewBox="0 0 7 4"><path d="M0 4h7L3.500 0z" fill="#a3a3a3" /></svg>
          <VThumb />
          <svg width="7" height="4" viewBox="0 0 7 4"><path d="M0 0h7L3.500 4z" fill="#505050" /></svg>
        </VScroll>
      </Viewport>
      <HScroll>
        <svg width="4" height="7" viewBox="0 0 4 7"><path d="M4 0v7L0 3.500z" fill="#a3a3a3" /></svg>
        <HThumb />
        <svg width="4" height="7" viewBox="0 0 4 7"><path d="M0 0v7l4-3.500z" fill="#505050" /></svg>
        <ScrollCorner />
      </HScroll>
      <WindowsTaskbar />
    </Screen>
  );
}
